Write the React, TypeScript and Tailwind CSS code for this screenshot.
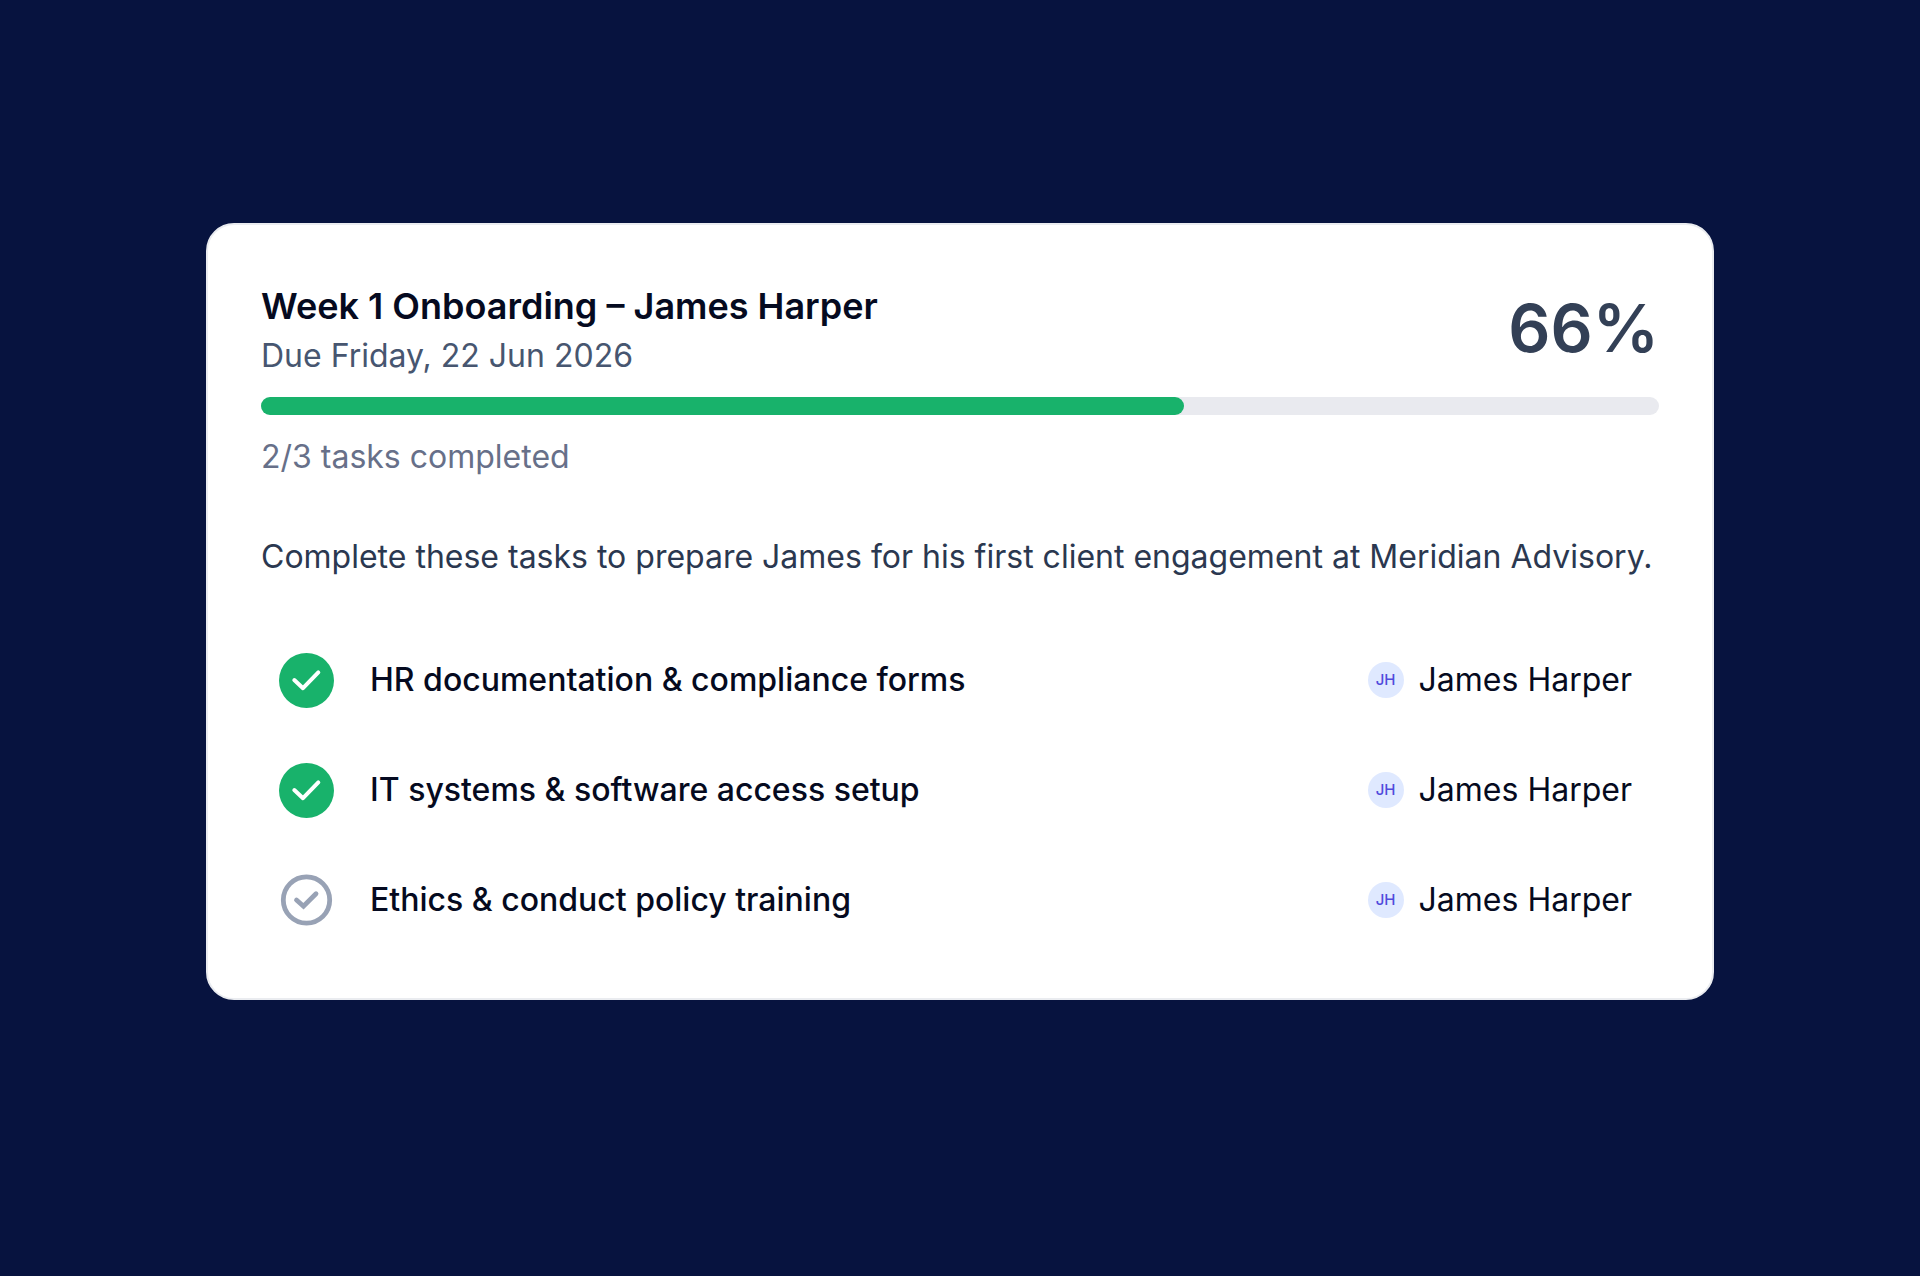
import React, { useState } from "react";

interface Task {
  id: string;
  title: string;
  assignee: string;
  initials: string;
  done: boolean;
}

const initialTasks: Task[] = [
  {
    id: "hr-docs",
    title: "HR documentation & compliance forms",
    assignee: "James Harper",
    initials: "JH",
    done: true,
  },
  {
    id: "it-setup",
    title: "IT systems & software access setup",
    assignee: "James Harper",
    initials: "JH",
    done: true,
  },
  {
    id: "ethics",
    title: "Ethics & conduct policy training",
    assignee: "James Harper",
    initials: "JH",
    done: false,
  },
];

const StatusIcon: React.FC<{ done: boolean }> = ({ done }) => {
  if (done) {
    return (
      <svg viewBox="0 0 55 55" className="w-[55px] h-[55px]" fill="none" aria-hidden="true">
        <circle cx="27.5" cy="27.5" r="27.5" fill="#18b26b" />
        <path
          d="M15.3 27L24 35.2L39.3 19.4"
          stroke="white"
          strokeWidth="4"
          strokeLinecap="round"
          strokeLinejoin="round"
        />
      </svg>
    );
  }

  return (
    <svg viewBox="0 0 55 55" className="w-[55px] h-[55px]" fill="none" aria-hidden="true">
      <circle cx="27.5" cy="27" r="23.2" stroke="#98a2b5" strokeWidth="4.8" />
      <path
        d="M17.5 27L24.5 33.2L37 20.8"
        stroke="#98a2b5"
        strokeWidth="4.8"
        strokeLinecap="round"
      />
    </svg>
  );
};

interface TaskRowProps {
  task: Task;
  onToggle: (id: string) => void;
}

const TaskRow: React.FC<TaskRowProps> = ({ task, onToggle }) => {
  return (
    <li className="flex items-center justify-between h-[110px] pl-[18px] pr-[27px]">
      <label htmlFor={task.id} className="relative flex items-center gap-9 cursor-pointer">
        <input
          type="checkbox"
          id={task.id}
          checked={task.done}
          onChange={() => onToggle(task.id)}
          className="sr-only"
        />
        <StatusIcon done={task.done} />
        <span className="font-medium">{task.title}</span>
      </label>
      <div className="flex items-center gap-[15px]">
        <span className="flex items-center justify-center w-9 h-9 rounded-full bg-[#dfe9ff] text-[15px] font-medium text-[#504bdc]">
          {task.initials}
        </span>
        <span>{task.assignee}</span>
      </div>
    </li>
  );
};

const App: React.FC = () => {
  const [tasks, setTasks] = useState<Task[]>(initialTasks);

  const completed = tasks.filter((task) => task.done).length;
  const percent = Math.floor((completed / tasks.length) * 100);

  const handleToggle = (id: string) => {
    setTasks((prev) =>
      prev.map((task) => (task.id === id ? { ...task, done: !task.done } : task))
    );
  };

  return (
    <main className="min-h-screen bg-[#07133f] px-[206px] pt-[223px] font-['Inter',sans-serif] text-[32px] leading-[44px] text-[#050a20]">
      <section className="bg-white border-2 border-[#eaecf0] rounded-[28px] px-[53px] pt-[53px] pb-[43px]">
        <header className="flex items-center justify-between">
          <div>
            <h1 className="text-[36px] leading-[56px] font-semibold">
              Week 1 Onboarding – James Harper
            </h1>
            <p className="text-[#475670]">Due Friday, 22 Jun 2026</p>
          </div>
          <p className="text-[66px] leading-[72px] font-semibold text-[#334056]">
            {percent}%
          </p>
        </header>

        <div
          role="progressbar"
          aria-label="Tasks completed"
          aria-valuenow={percent}
          aria-valuemin={0}
          aria-valuemax={100}
          className="mt-[19px] h-[18px] rounded-full bg-[#e9eaef]"
        >
          <div
            className="h-full rounded-full bg-[#18b26b]"
            style={{ width: `${percent}%` }}
          />
        </div>
        <p className="mt-5 text-[#677089]">
          {completed}/{tasks.length} tasks completed
        </p>

        <p className="mt-14 text-[#2b3850]">
          Complete these tasks to prepare James for his first client engagement
          at Meridian Advisory.
        </p>

        <ul className="mt-[46px]">
          {tasks.map((task) => (
            <TaskRow key={task.id} task={task} onToggle={handleToggle} />
          ))}
        </ul>
      </section>
    </main>
  );
};

export default App;
